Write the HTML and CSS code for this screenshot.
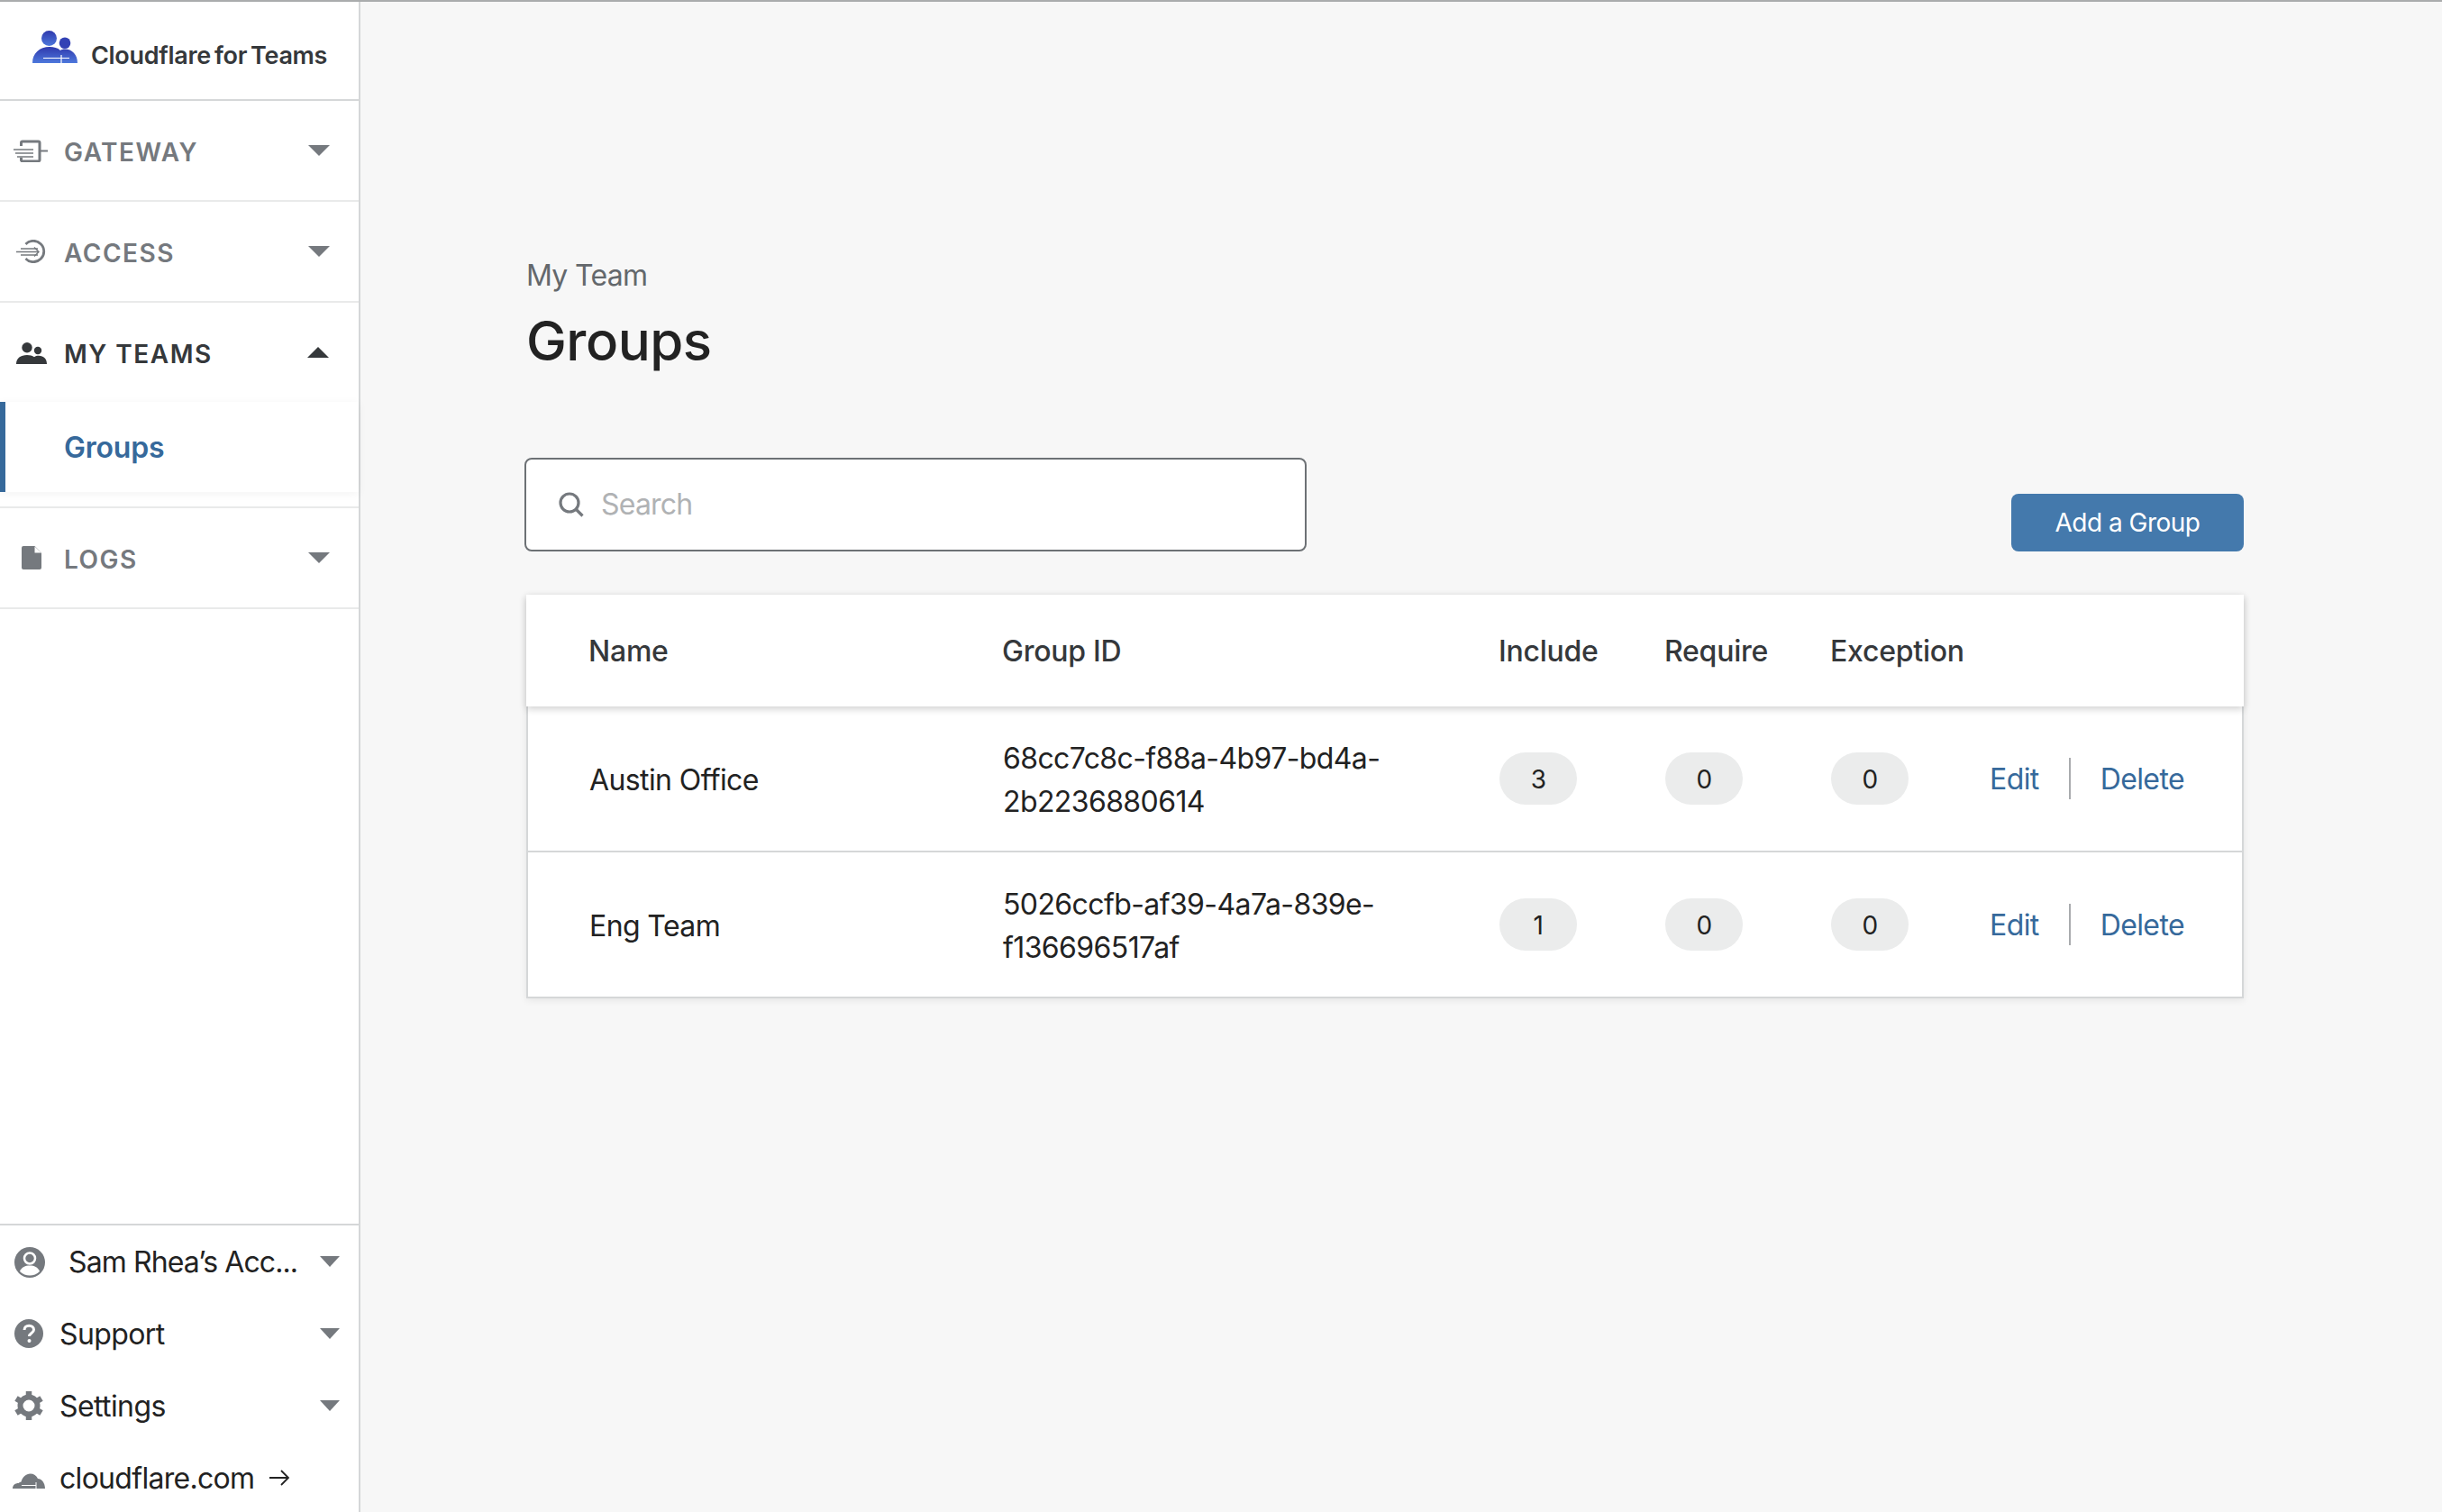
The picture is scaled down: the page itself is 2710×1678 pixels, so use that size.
FILE: index.html
```html
<!DOCTYPE html>
<html lang="en">
<head>
  <meta charset="UTF-8" />
  <meta name="viewport" content="width=device-width, initial-scale=1.0"/>
  <title>Groups - Cloudflare for Teams</title>
  <link rel="stylesheet" href="styles.css">
</head>
<body>
  <div class="app">
    <aside class="sidebar">
      <div class="brand">
        <svg class="brand-icon" viewBox="0 0 50 36" width="50" height="36">
          <defs>
            <linearGradient id="brandFill" x1="0" y1="0" x2="0" y2="1">
              <stop offset="0" stop-color="#2f39ad"/>
              <stop offset="1" stop-color="#4d78dc"/>
            </linearGradient>
          </defs>
          <circle cx="18.500" cy="8.500" r="8.500" fill="url(#brandFill)"/>
          <circle cx="36" cy="13.700" r="6.300" fill="#3342b5"/>
          <path d="M0 36c0-11 8-18 19-18 5 0 9 1 12 4 1-1 3-1.500 5-1.500 8 0 14 6 14 15.500z" fill="url(#brandFill)"/>
          <path d="M12 30.500h29M32 27v9" stroke="#fff" stroke-width="1.200" fill="none"/>
        </svg>
        <span class="brand-name">Cloudflare for Teams</span>
      </div>

      <div class="nav-section">
        <div class="nav-head">
          <svg class="nav-icon" viewBox="0 0 40 26" width="40" height="26" fill="none" stroke="#75797e">
            <path d="M9.500 8V4.500a1.500 1.500 0 0 1 1.500-1.500h17.500a1.500 1.500 0 0 1 1.500 1.500v19a1.500 1.500 0 0 1-1.500 1.500H11a1.500 1.500 0 0 1-1.500-1.500V21" stroke-width="3"/>
            <path d="M30 13.500h9" stroke-width="2"/>
            <path d="M1 12h22M3 16h20M5 20h18" stroke-width="1.400"/>
          </svg>
          <span class="nav-label">GATEWAY</span>
          <span class="caret"></span>
        </div>
      </div>

      <div class="nav-section">
        <div class="nav-head">
          <svg class="nav-icon" viewBox="0 0 40 26" width="40" height="26" fill="none" stroke="#75797e">
            <path d="M14.500 5a11.700 11.700 0 1 1 0 16" stroke-width="2.800"/>
            <path d="M9 10h19M4 13.500h25M9 17h19" stroke-width="1.400"/>
            <path d="M24 8.500l5 5-5 5" stroke-width="1.400"/>
          </svg>
          <span class="nav-label">ACCESS</span>
          <span class="caret"></span>
        </div>
      </div>

      <div class="nav-section">
        <div class="nav-head is-open">
          <svg class="nav-icon" viewBox="0 0 40 26" width="40" height="26" fill="#35383b">
            <circle cx="16" cy="7.700" r="5.700"/>
            <circle cx="28" cy="11" r="4.200"/>
            <path d="M4 26c0-6.500 5-10 12-10 3 0 6 .7 8 2.200 1.500-1 3-1.400 5-1.400 5.500 0 9 3.500 9 9.200z"/>
          </svg>
          <span class="nav-label">MY TEAMS</span>
          <span class="caret caret-up"></span>
        </div>
        <div class="nav-sub">
          <a class="nav-sub-item">Groups</a>
        </div>
      </div>

      <div class="nav-section">
        <div class="nav-head">
          <svg class="nav-icon" viewBox="0 0 40 26" width="40" height="26" fill="#75797e">
            <path d="M12 0h12.500l7.500 7.500V24a2 2 0 0 1-2 2H12a2 2 0 0 1-2-2V2a2 2 0 0 1 2-2z"/>
            <path d="M24.500 0.500v7H32z" fill="#fff"/>
          </svg>
          <span class="nav-label">LOGS</span>
          <span class="caret"></span>
        </div>
      </div>

      <div class="sidebar-fill"></div>

      <div class="foot">
        <div class="foot-row">
          <svg class="foot-icon" viewBox="0 0 36 36" width="36" height="36">
            <circle cx="17" cy="19" r="17" fill="#75797e"/>
            <circle cx="17" cy="14.500" r="6" fill="none" stroke="#fff" stroke-width="2.500"/>
            <path d="M6 29c2-5 6-6.500 11-6.500s9 1.500 11 6.500c-3 3-7 4.500-11 4.500S9 32 6 29z" fill="#fff"/>
          </svg>
          <span class="foot-label foot-account">Sam Rhea’s Acc...</span>
          <span class="caret caret-small"></span>
        </div>
        <div class="foot-row">
          <svg class="foot-icon" viewBox="0 0 36 36" width="36" height="36">
            <circle cx="16" cy="18" r="16" fill="#75797e"/>
            <path d="M11 14c0-3 2.300-4.800 5.200-4.800 3 0 5.300 1.800 5.300 4.500 0 3.800-5 3.800-5 7.300" fill="none" stroke="#fff" stroke-width="3"/>
            <circle cx="16.500" cy="26" r="2" fill="#fff"/>
          </svg>
          <span class="foot-label">Support</span>
          <span class="caret caret-small"></span>
        </div>
        <div class="foot-row">
          <svg class="foot-icon" viewBox="0 0 36 36" width="36" height="36">
            <circle cx="16" cy="18" r="9.500" fill="none" stroke="#75797e" stroke-width="6"/>
            <path d="M16 2v6M16 28v6M2 10l5 3M25 23l5 3M2 26l5-3M25 13l5-3" stroke="#75797e" stroke-width="6.500"/>
          </svg>
          <span class="foot-label">Settings</span>
          <span class="caret caret-small"></span>
        </div>
        <div class="foot-row foot-last">
          <svg class="foot-icon foot-cloud" viewBox="0 0 36 18" width="36" height="18">
            <path d="M0 18c0-4 3-6 6.500-6 1-1 2-1.500 3-1.500C11 5 15 1.500 19.500 1.500c4 0 7 2 8.500 5.500 4 0 8 4.500 8 11z" fill="#75797e"/>
            <path d="M10 14.500h16M26 11v7" stroke="#fff" stroke-width="1" fill="none"/>
          </svg>
          <span class="foot-label foot-site">cloudflare.com</span>
          <svg class="foot-arrow" viewBox="0 0 24 20" width="24" height="20" fill="none" stroke="#222" stroke-width="1.800">
            <path d="M1 10h21M14 2l8 8-8 8"/>
          </svg>
        </div>
      </div>
    </aside>

    <main class="main">
      <div class="crumb">My Team</div>
      <h1>Groups</h1>

      <div class="toolbar">
        <label class="search">
          <svg viewBox="0 0 28 28" width="28" height="28" fill="none" stroke="#75797e" stroke-width="3.200">
            <circle cx="12" cy="12" r="10"/>
            <path d="M19 19l7.500 7.500"/>
          </svg>
          <input type="text" placeholder="Search" />
        </label>
        <button class="add-btn">Add a Group</button>
      </div>

      <div class="table">
        <div class="table-head">
          <div>Name</div>
          <div>Group ID</div>
          <div>Include</div>
          <div>Require</div>
          <div>Exception</div>
        </div>

        <div class="table-row">
          <div class="cell-text">Austin Office</div>
          <div class="cell-text">68cc7c8c-f88a-4b97-bd4a-<br>2b2236880614</div>
          <div><span class="pill">3</span></div>
          <div><span class="pill">0</span></div>
          <div><span class="pill">0</span></div>
          <div class="actions"><a>Edit</a><span class="sep"></span><a>Delete</a></div>
        </div>

        <div class="table-row">
          <div class="cell-text">Eng Team</div>
          <div class="cell-text">5026ccfb-af39-4a7a-839e-<br>f136696517af</div>
          <div><span class="pill">1</span></div>
          <div><span class="pill">0</span></div>
          <div><span class="pill">0</span></div>
          <div class="actions"><a>Edit</a><span class="sep"></span><a>Delete</a></div>
        </div>
      </div>
    </main>
  </div>
</body>
</html>
```

FILE: styles.css
```css
* { box-sizing: border-box; margin: 0; padding: 0; font-family: Inter, "Liberation Sans", sans-serif; }
body { background: #f7f7f7; color: #222; height: 1678px; overflow: hidden; }

.app {
  display: flex;
  height: 1678px;
  border-top: 2px solid #aaacad;
}

/* Sidebar */
.sidebar {
  width: 400px;
  flex-shrink: 0;
  display: flex;
  flex-direction: column;
  background: #fff;
  border-right: 2px solid #d5d7d8;
}

.brand {
  height: 110px;
  flex-shrink: 0;
  display: flex;
  align-items: flex-start;
  padding: 32px 0 0 36px;
  border-bottom: 2px solid #d5d7d8;
}

.brand-name {
  margin: 11px 0 0 15px;
  font-size: 27px;
  font-weight: 600;
  letter-spacing: -0.3px;
  word-spacing: -2.5px;
  color: #35383b;
  white-space: nowrap;
}

.nav-section {
  flex-shrink: 0;
  border-bottom: 2px solid #e9eaea;
}

.nav-head {
  height: 110px;
  display: flex;
  align-items: center;
  padding: 0 32px 0 14px;
}

.nav-icon { flex-shrink: 0; }

.nav-label {
  margin: 3px 0 0 17px;
  font-size: 28px;
  font-weight: 600;
  letter-spacing: 1.5px;
  color: #75797e;
}

.is-open .nav-label { color: #35383b; }

.caret {
  margin-left: auto;
  margin-top: -1px;
  width: 0;
  height: 0;
  border-left: 12.5px solid transparent;
  border-right: 12.5px solid transparent;
  border-top: 12px solid #75797e;
}

.caret-up {
  margin-right: 1px;
  border-top: 0;
  border-bottom: 12px solid #35383b;
}

.nav-sub {
  padding-bottom: 16px;
}

.nav-sub-item {
  display: flex;
  align-items: center;
  height: 100px;
  padding-left: 65px;
  border-left: 6px solid #36699b;
  font-size: 32px;
  font-weight: 600;
  letter-spacing: -0.2px;
  color: #36699b;
  box-shadow: 0 2px 10px rgba(0, 0, 0, 0.05);
}

.sidebar-fill { flex: 1; }

.foot {
  flex-shrink: 0;
  border-top: 2px solid #d5d7d8;
}

.foot-row {
  height: 80px;
  display: flex;
  align-items: center;
  padding: 0 21px 0 16px;
}

.foot-last {
  margin-bottom: -2px;
}

.foot-icon { flex-shrink: 0; }

.foot-cloud {
  margin: 6px 0 0 -2px;
}

.foot-label {
  margin-left: 14px;
  font-size: 32px;
  letter-spacing: -0.6px;
  color: #222;
  white-space: nowrap;
}

.foot-site { margin-left: 16px; letter-spacing: -0.7px; }

.foot-account { margin-left: 24px; letter-spacing: -0.9px; }

.foot-arrow { margin-left: 16px; }

.caret-small {
  border-left-width: 11px;
  border-right-width: 11px;
  border-top-width: 12px;
}

/* Main */
.main {
  flex: 1;
  min-width: 0;
  padding: 284px 220px 0 184px;
}

.crumb {
  font-size: 32px;
  line-height: 40px;
  letter-spacing: -0.7px;
  color: #64686c;
}

h1 {
  margin-top: 16px;
  font-size: 60px;
  line-height: 72px;
  font-weight: 500;
  letter-spacing: -0.5px;
  color: #222;
}

.toolbar {
  display: flex;
  justify-content: space-between;
  align-items: flex-end;
  margin-top: 94px;
}

.search {
  display: flex;
  align-items: center;
  width: 868px;
  height: 104px;
  margin-left: -2px;
  padding-left: 36px;
  background: #fff;
  border: 2px solid #6d7175;
  border-radius: 8px;
}

.search input {
  flex: 1;
  margin-left: 19px;
  padding-bottom: 2px;
  border: none;
  outline: none;
  background: none;
  font-size: 32px;
  letter-spacing: -0.8px;
  color: #222;
}

.search input::placeholder { color: #b0b2b4; opacity: 1; }

.add-btn {
  width: 258px;
  height: 64px;
  border: none;
  border-radius: 8px;
  background: #4479ac;
  color: #fff;
  font-size: 28px;
  letter-spacing: -0.5px;
  cursor: pointer;
}

.table {
  margin-top: 48px;
  background: #fff;
  box-shadow: 0 2px 8px rgba(0, 0, 0, 0.08);
}

.table-head, .table-row {
  display: grid;
  grid-template-columns: 459px 551px 184px 184px 178px 1fr;
  align-items: center;
}

.table-head {
  position: relative;
  height: 124px;
  padding-left: 69px;
  font-size: 32px;
  font-weight: 500;
  letter-spacing: -0.25px;
  color: #35383b;
  box-shadow: 0 3px 8px rgba(0, 0, 0, 0.18);
}

.table-row {
  height: 162px;
  padding-left: 68px;
  font-size: 32px;
  line-height: 48px;
  letter-spacing: -0.6px;
  color: #222;
  border: 2px solid #d5d7d8;
  border-top: 0;
}

.cell-text { padding-top: 3px; }

.pill {
  display: flex;
  align-items: center;
  justify-content: center;
  width: 86px;
  height: 58px;
  padding-top: 2px;
  border-radius: 29px;
  background: #ebecec;
  font-size: 28px;
}

.actions {
  display: flex;
  align-items: center;
  margin-left: -2px;
}

.actions a {
  padding-top: 1px;
  color: #36699b;
  cursor: pointer;
}

.sep {
  width: 2px;
  height: 46px;
  margin: 0 33px;
  background: #a9abae;
}
```
